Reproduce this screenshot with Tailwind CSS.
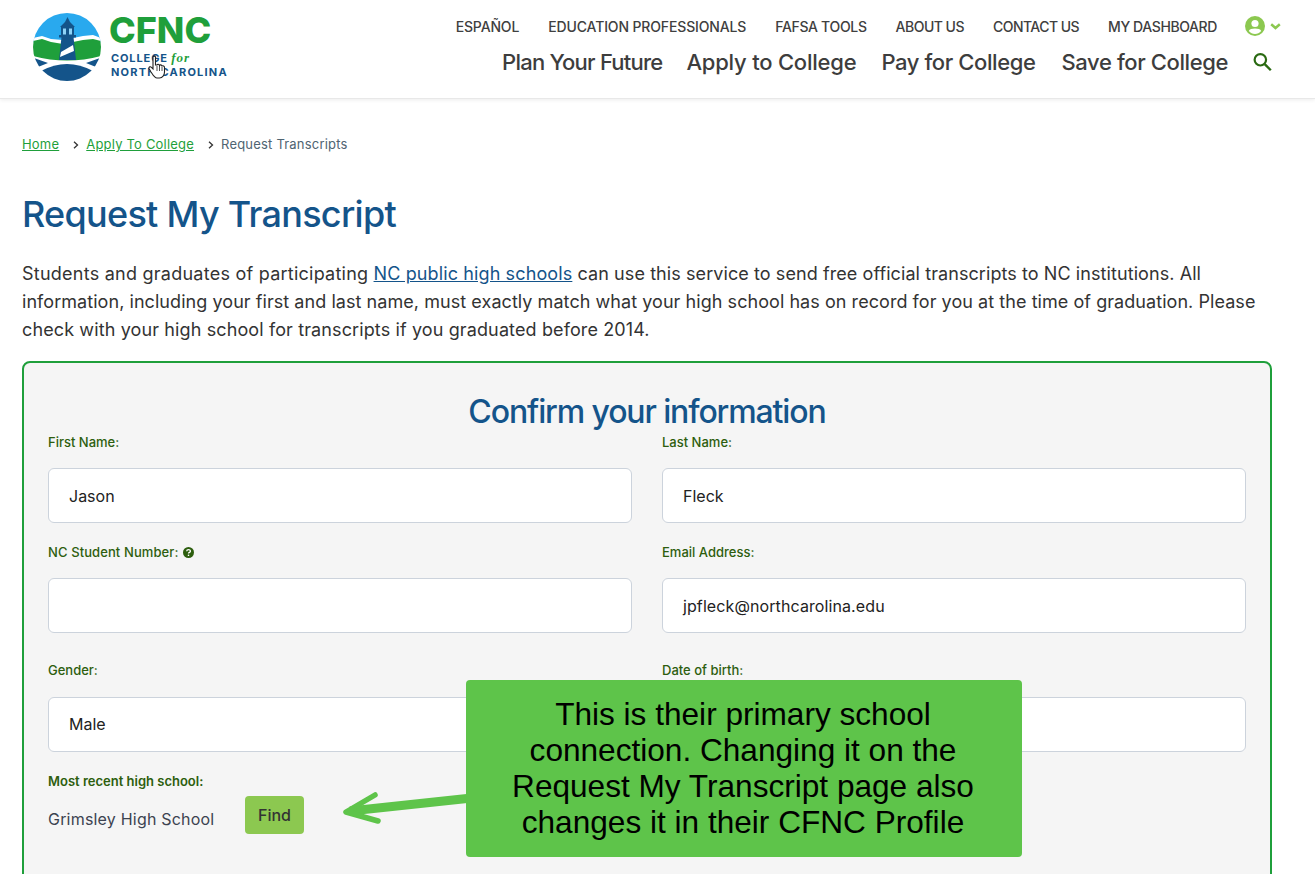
<!DOCTYPE html>
<html lang="en">
<head>
  <meta charset="UTF-8" />
  <meta name="viewport" content="width=device-width, initial-scale=1.0" />
  <title>Request My Transcript</title>
  <script src="https://cdn.jsdelivr.net/npm/@tailwindcss/browser@4"></script>
</head>
<body class="relative h-screen overflow-hidden bg-white font-['Inter',sans-serif] text-[#333]">

  <!-- Header -->
  <header class="flex h-[99px] justify-between border-b border-[#e8e8e8] pl-[33px] pr-[52px] shadow-[0_1px_4px_rgba(0,0,0,0.08)]">
    <!-- Logo -->
    <a class="relative mt-[13px] flex h-[68px] w-[196px] gap-[8px]">
      <svg width="68" height="68" viewBox="0 0 68 68" class="shrink-0">
        <defs><clipPath id="logo-circle"><circle cx="34" cy="34" r="34" /></clipPath></defs>
        <g clip-path="url(#logo-circle)">
          <rect width="68" height="30" fill="#29a9ee" />
          <path d="M0 25 L9 23 L18 26 L30 27 L50 23 L60 22 L68 25 V48 H0 Z" fill="#fff" />
          <path d="M0 28 L9 26 L18 29 L30 31 L50 27 L60 26 L68 28 V43 Q34 52 0 43 Z" fill="#1f9f3b" />
          <path d="M1 45 L15 50 L5 54 Z M67 45 L53 50 L63 54 Z" fill="#14548a" />
          <path d="M8 58 Q34 44 60 58 L52 68 H16 Z" fill="#14548a" />
          <path d="M34.500 4 L37 9 L42 14 H27 L32 9 Z" fill="#14548a" />
          <rect x="28" y="14" width="13" height="9" fill="#14548a" />
          <rect x="30" y="15.500" width="3" height="6" fill="#8fd3f7" />
          <rect x="36" y="15.500" width="3" height="6" fill="#8fd3f7" />
          <rect x="26" y="22" width="17" height="2.500" fill="#14548a" />
          <path d="M28.500 24 H40.500 L43 47 H26 Z" fill="#14548a" />
          <path d="M28 39 L40 32 L41 38 L27 44 Z" fill="#fff" />
        </g>
      </svg>
      <div class="flex flex-col">
        <span class="mt-[-2px] text-[36px] leading-[38px] font-extrabold text-[#1f9f3b]">CFNC</span>
        <span class="mt-[2px] ml-[2px] text-[11px] leading-[14px] font-bold tracking-[0.08em] text-[#14548a]">COLLEGE <em class="font-['Liberation_Serif',serif] text-[13px] text-[#1f9f3b]">for</em></span>
        <span class="ml-[2px] text-[11px] leading-[15px] font-bold tracking-[0.11em] whitespace-nowrap text-[#14548a]">NORTH CAROLINA</span>
      </div>
      <!-- Pointer cursor -->
      <svg width="18" height="24" viewBox="0 0 18 24" class="absolute top-[42px] left-[115px]">
        <path d="M5 2 C5 0.800 7.500 0.800 7.500 2 V10 L9 10 C9.500 9 11 9 11.500 10.500 C12 9.500 13.500 9.700 14 11 C15 10.500 16.500 11 16.500 12.500 V17 C16.500 20 14.500 23 11.500 23 H9 C6.500 23 5 20 3 17 L1 13.500 C0.500 12 2.500 11 3.500 12.500 L5 14 Z" fill="#fff" stroke="#222" stroke-width="1.100" />
        <path d="M9 11 V16 M11.500 11 V16 M14 12 V16" stroke="#222" stroke-width="0.800" />
      </svg>
    </a>

    <!-- Navigation -->
    <nav class="flex flex-col items-end">
      <div class="mt-[16px] mr-[-18px] flex h-[20px] items-center gap-[29px] text-[14px] font-medium tracking-[-0.01em] text-[#404040]">
        <a>ESPAÑOL</a>
        <a>EDUCATION PROFESSIONALS</a>
        <a class="tracking-[-0.023em]">FAFSA TOOLS</a>
        <a class="tracking-[-0.037em]">ABOUT US</a>
        <a class="tracking-[-0.039em]">CONTACT US</a>
        <a class="tracking-[-0.028em]">MY DASHBOARD</a>
        <span class="ml-[-1px] flex items-center gap-[5px]">
          <svg width="20" height="20" viewBox="0 0 20 20">
            <circle cx="10" cy="10" r="10" fill="#8cc850" />
            <circle cx="10" cy="7.500" r="3.600" fill="#fff" />
            <path d="M3.800 15 C5 11.800 15 11.800 16.200 15 C14.500 17 12.500 18 10 18 C7.500 18 5.500 17 3.800 15 Z" fill="#fff" />
          </svg>
          <svg width="11" height="7" viewBox="0 0 11 7"><path d="M1.200 1.300 L5.500 5 L9.800 1.300" fill="none" stroke="#8cc850" stroke-width="2.500" /></svg>
        </span>
      </div>
      <div class="mt-[6px] mr-[-10px] flex h-[40px] items-center text-[22px] font-medium tracking-[-0.018em] text-[#3d3d3d]">
        <a class="tracking-[-0.035em]">Plan Your Future</a>
        <a class="ml-[24px] tracking-[-0.01em]">Apply to College</a>
        <a class="ml-[25px]">Pay for College</a>
        <a class="ml-[26px]">Save for College</a>
        <svg width="22" height="22" viewBox="0 0 20 20" class="ml-[23px]">
          <circle cx="8.500" cy="8" r="5.200" fill="none" stroke="#2a6a12" stroke-width="2" />
          <path d="M12.500 12 L18 17.500" stroke="#2a6a12" stroke-width="2.200" />
        </svg>
      </div>
    </nav>
  </header>

  <main class="px-[22px]">
    <!-- Breadcrumb -->
    <div class="mt-[37px] flex h-[18px] items-center text-[13px] tracking-[0.2px] text-[#4f6472]">
      <a class="text-[#1f9f3b] underline">Home</a>
      <svg width="6" height="8" viewBox="0 0 6 8" class="mr-[7px] ml-[14px]"><path d="M1 0.800 L4.500 4 L1 7.200" fill="none" stroke="#333" stroke-width="1.300" /></svg>
      <a class="text-[#1f9f3b] underline">Apply To College</a>
      <svg width="6" height="8" viewBox="0 0 6 8" class="mr-[7px] ml-[14px]"><path d="M1 0.800 L4.500 4 L1 7.200" fill="none" stroke="#333" stroke-width="1.300" /></svg>
      <span>Request Transcripts</span>
    </div>

    <h1 class="mt-[35px] text-[36px] leading-[50px] font-medium tracking-[-0.02em] text-[#14548a]">Request My Transcript</h1>

    <p class="mt-[21px] w-[1250px] text-[18px] leading-[28px] tracking-[0.12px] text-[#333]">
      <span class="tracking-[0.245px]">Students and graduates of participating</span> <a class="text-[#14548a] underline">NC public high schools</a> <span class="tracking-[0.08px]">can use this service to send free official transcripts to NC institutions. All</span> <span class="tracking-[0.056px]">information, including your first and last name, must exactly match what your high school has on record for you at the time of graduation. Please</span> check with your high school for transcripts if you graduated before 2014.
    </p>

    <!-- Form card -->
    <section class="mt-[17px] h-[600px] w-[1250px] rounded-[8px] border-2 border-[#1f9f3b] bg-[#f5f5f5] px-[24px]">
      <h2 class="mt-[27px] text-center text-[32px] leading-[43px] font-medium tracking-[-0.035em] text-[#14548a]">Confirm your information</h2>

      <div class="grid grid-cols-[584px_584px] gap-x-[30px]">
        <div>
          <label class="block h-[18px] text-[13px] leading-[18px] font-medium text-[#2d5e0e]">First Name:</label>
          <div class="mt-[17px] flex h-[55px] items-center rounded-[6px] border border-[#ccd3dc] bg-white px-[20px] text-[16px] text-[#222]">Jason</div>
        </div>
        <div>
          <label class="block h-[18px] text-[13px] leading-[18px] font-medium text-[#2d5e0e]">Last Name:</label>
          <div class="mt-[17px] flex h-[55px] items-center rounded-[6px] border border-[#ccd3dc] bg-white px-[20px] text-[16px] text-[#222]">Fleck</div>
        </div>

        <div class="mt-[20px]">
          <label class="flex h-[18px] items-center gap-[4px] text-[13px] leading-[18px] font-medium tracking-[0.1px] text-[#2d5e0e]">NC Student Number:
            <svg width="11" height="11" viewBox="0 0 11 11">
              <circle cx="5.500" cy="5.500" r="5.500" fill="#2d5e0e" />
              <path d="M3.700 4.300 C3.700 2.200 7.400 2.200 7.400 4.200 C7.400 5.400 5.500 5.400 5.500 6.600" fill="none" stroke="#fff" stroke-width="1.300" />
              <rect x="4.800" y="7.600" width="1.400" height="1.400" fill="#fff" />
            </svg>
          </label>
          <div class="mt-[17px] h-[55px] rounded-[6px] border border-[#ccd3dc] bg-white"></div>
        </div>
        <div class="mt-[20px]">
          <label class="block h-[18px] text-[13px] leading-[18px] font-medium text-[#2d5e0e]">Email Address:</label>
          <div class="mt-[17px] flex h-[55px] items-center rounded-[6px] border border-[#ccd3dc] bg-white px-[20px] text-[16px] tracking-[0.1px] text-[#222]">jpfleck@northcarolina.edu</div>
        </div>

        <div class="mt-[28px]">
          <label class="block h-[18px] text-[13px] leading-[18px] font-medium text-[#2d5e0e]">Gender:</label>
          <div class="mt-[18px] flex h-[55px] items-center rounded-[6px] border border-[#ccd3dc] bg-white px-[20px] pb-[1px] text-[16px] text-[#222]">Male</div>
        </div>
        <div class="mt-[28px]">
          <label class="block h-[18px] text-[13px] leading-[18px] font-medium text-[#2d5e0e]">Date of birth:</label>
          <div class="mt-[18px] h-[55px] rounded-[6px] border border-[#ccd3dc] bg-white"></div>
        </div>
      </div>

      <label class="mt-[20px] block h-[18px] text-[13px] leading-[18px] font-semibold text-[#2d5e0e]">Most recent high school:</label>
      <div class="mt-[6px] flex items-center">
        <span class="w-[197px] pt-[8px] text-[16px] tracking-[0.2px] text-[#3c4350]">Grimsley High School</span>
        <button class="h-[38px] w-[59px] rounded-[4px] bg-[#8cc850] text-[16px] font-medium text-[#333]">Find</button>
      </div>
    </section>
  </main>

  <!-- Annotation over the page -->
  <div class="absolute top-[680px] left-[466px] flex h-[177px] w-[556px] items-center justify-center rounded-[4px] bg-[#5ec44a] pr-[42px] pb-[2px] pl-[40px] text-center font-['Liberation_Sans',sans-serif] text-[31.6px] leading-[36px] text-black">
    This is their primary school connection. Changing it on the Request My Transcript page also changes it in their CFNC Profile
  </div>
  <svg width="126" height="40" viewBox="0 0 126 40" class="absolute top-[790px] left-[342px]">
    <path d="M125 8.500 L8 21" fill="none" stroke="#5ec44a" stroke-width="9" />
    <path d="M33 5 L4 22 L36 31" fill="none" stroke="#5ec44a" stroke-width="5.500" stroke-linecap="round" stroke-linejoin="round" />
  </svg>
</body>
</html>
